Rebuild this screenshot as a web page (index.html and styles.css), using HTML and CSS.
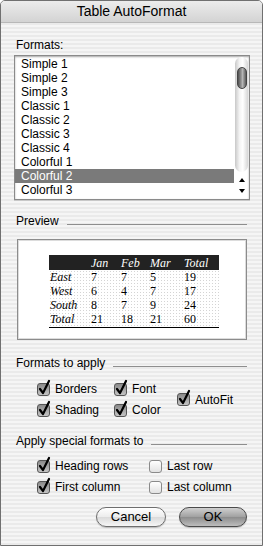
FILE: index.html
```html
<!DOCTYPE html>
<html lang="en">
<head>
    <meta charset="UTF-8">
    <title>Table AutoFormat</title>
    <link rel="stylesheet" href="styles.css">
</head>
<body>
    <div class="window">
        <div class="titlebar">Table AutoFormat</div>

        <div class="dialog">
            <div class="label">Formats:</div>

            <!-- format list -->
            <div class="listbox">
                <ul class="items">
                    <li>Simple 1</li>
                    <li>Simple 2</li>
                    <li>Simple 3</li>
                    <li>Classic 1</li>
                    <li>Classic 2</li>
                    <li>Classic 3</li>
                    <li>Classic 4</li>
                    <li>Colorful 1</li>
                    <li class="selected">Colorful 2</li>
                    <li>Colorful 3</li>
                </ul>
                <div class="scrollbar">
                    <div class="track"><div class="thumb"></div></div>
                    <div class="arrows">
                        <span class="arrow up"></span>
                        <span class="arrow down"></span>
                    </div>
                </div>
            </div>

            <div class="group"><span>Preview</span><i class="rule"></i></div>

            <!-- sample table -->
            <div class="preview">
                <table class="sample">
                    <colgroup>
                        <col style="width:41px"><col style="width:30px"><col style="width:29px"><col style="width:34px"><col>
                    </colgroup>
                    <thead>
                        <tr><th></th><th>Jan</th><th>Feb</th><th>Mar</th><th>Total</th></tr>
                    </thead>
                    <tbody>
                        <tr><th>East</th><td>7</td><td>7</td><td>5</td><td>19</td></tr>
                        <tr><th>West</th><td>6</td><td>4</td><td>7</td><td>17</td></tr>
                        <tr><th>South</th><td>8</td><td>7</td><td>9</td><td>24</td></tr>
                        <tr class="total"><th>Total</th><td>21</td><td>18</td><td>21</td><td>60</td></tr>
                    </tbody>
                </table>
            </div>

            <div class="group"><span>Formats to apply</span><i class="rule"></i></div>

            <div class="checks apply">
                <label class="check on"><span class="box"><svg viewBox="0 0 15 18"><path d="M3 10 L6 14 L12 2"/></svg></span>Borders</label>
                <label class="check on"><span class="box"><svg viewBox="0 0 15 18"><path d="M3 10 L6 14 L12 2"/></svg></span>Font</label>
                <label class="check on autofit"><span class="box"><svg viewBox="0 0 15 18"><path d="M3 10 L6 14 L12 2"/></svg></span>AutoFit</label>
                <label class="check on"><span class="box"><svg viewBox="0 0 15 18"><path d="M3 10 L6 14 L12 2"/></svg></span>Shading</label>
                <label class="check on"><span class="box"><svg viewBox="0 0 15 18"><path d="M3 10 L6 14 L12 2"/></svg></span>Color</label>
            </div>

            <div class="group"><span>Apply special formats to</span><i class="rule"></i></div>

            <div class="checks special">
                <label class="check on"><span class="box"><svg viewBox="0 0 15 18"><path d="M3 10 L6 14 L12 2"/></svg></span>Heading rows</label>
                <label class="check"><span class="box"></span>Last row</label>
                <label class="check on"><span class="box"><svg viewBox="0 0 15 18"><path d="M3 10 L6 14 L12 2"/></svg></span>First column</label>
                <label class="check"><span class="box"></span>Last column</label>
            </div>

            <div class="buttons">
                <button class="btn cancel">Cancel</button>
                <button class="btn default">OK</button>
            </div>
        </div>
    </div>
</body>
</html>
```

FILE: styles.css
```css
* {
    box-sizing: border-box;
}

html, body {
    margin: 0;
}

body {
    font-family: "Liberation Sans", Arial, sans-serif;
    font-size: 12px;
    color: #000;
    background: #fff;
}

/* window frame with aqua pinstripes */
.window {
    width: 263px;
    height: 546px;
    border: 1px solid #707070;
    border-radius: 5px 5px 0 0;
    background: repeating-linear-gradient(#f5f5f5 0 2px, #eaeaea 2px 4px);
    overflow: hidden;
}

.titlebar {
    height: 22px;
    line-height: 21px;
    text-align: center;
    font-size: 14px;
    background: linear-gradient(#ececec, #d3d3d3);
    border-bottom: 1px solid #b8b8b8;
}

.dialog {
    padding: 0 15px;
}

.label {
    line-height: 14px;
    margin-top: 15px;
}

/* list box */
.listbox {
    display: flex;
    height: 145px;
    margin: 3px -3px 0 -2px;
    background: #fff;
    border: 1px solid #8a8a8a;
    box-shadow: inset 0 1px 2px rgba(0,0,0,0.35), 0 1px 0 #c8c8c8;
}

.items {
    flex: 1;
    list-style: none;
    margin: 0;
    padding: 1px 0 0;
}

.items li {
    height: 14px;
    line-height: 14px;
    padding-left: 6px;
}

.items li.selected {
    background: #7a7a7a;
    color: #fff;
}

.scrollbar {
    width: 15px;
    display: flex;
    flex-direction: column;
}

.track {
    height: 115px;
    margin: 1px 1px 0 1px;
    padding-top: 10px;
    border-radius: 7px;
    background: linear-gradient(90deg, #c8c8c8, #f4f4f4 35%, #fff 60%, #d6d6d6);
}

.thumb {
    width: 10px;
    height: 22px;
    margin: 0 auto;
    border: 1px solid #444;
    border-radius: 5px;
    background: linear-gradient(90deg, #4e4e4e, #9c9c9c 45%, #b8b8b8 55%, #5a5a5a);
}

.arrows {
    flex: 1;
    display: flex;
    flex-direction: column;
    align-items: center;
    justify-content: space-around;
    padding: 2px 0 3px;
}

.arrow {
    width: 0;
    height: 0;
    border-left: 3px solid transparent;
    border-right: 3px solid transparent;
}

.arrow.up {
    border-bottom: 4px solid #000;
}

.arrow.down {
    border-top: 4px solid #000;
}

/* group headings with a rule */
.group {
    display: flex;
    align-items: center;
    gap: 8px;
    line-height: 14px;
    margin-top: 14px;
}

.group ~ .group {
    margin-top: 16px;
}

.rule {
    flex: 1;
    height: 1px;
    margin-top: 6px;
    background: #8e8e8e;
}

/* preview */
.preview {
    height: 101px;
    margin: 11px 0 0 1px;
    padding: 15px 0 0 31px;
    background: #fff;
    border: 1px solid #8c8c8c;
    box-shadow: inset 0 0 0 1px #dcdcdc;
}

.sample {
    width: 170px;
    table-layout: fixed;
    border-collapse: collapse;
    font-family: "Liberation Serif", "Times New Roman", serif;
    font-size: 12px;
}

.sample th,
.sample td {
    padding: 0 0 0 1px;
    height: 14px;
    line-height: 14px;
    text-align: left;
    font-weight: normal;
}

.sample th {
    font-style: italic;
}

.sample thead th {
    height: 15px;
    background: #222;
    color: #fff;
}

.sample tbody {
    background: radial-gradient(circle, #d4d4d4 0.7px, transparent 0.9px) 0 0 / 3px 3px;
}

.sample tr.total th,
.sample tr.total td {
    height: 15px;
    border-bottom: 1px solid #000;
}

/* checkboxes */
.checks {
    display: grid;
    row-gap: 5px;
    grid-auto-rows: 16px;
    margin-left: 21px;
}

.checks.apply {
    grid-template-columns: 77px 63px auto;
    margin-top: 11px;
}

.checks.special {
    grid-template-columns: 112px auto;
    margin-top: 10px;
}

.checks.apply .autofit {
    grid-column: 3;
    grid-row: 1 / span 2;
    align-self: center;
}

.check {
    display: flex;
    align-items: center;
    gap: 5px;
    white-space: nowrap;
}

.box {
    position: relative;
    flex: none;
    width: 13px;
    height: 13px;
    border: 1px solid #8a8a8a;
    border-radius: 3px;
    background: linear-gradient(#fff, #e2e2e2);
}

.check.on .box {
    border-color: #555;
    background: linear-gradient(#8a8a8a, #c4c4c4);
}

.box svg {
    position: absolute;
    left: -1px;
    top: -5px;
    width: 15px;
    height: 18px;
    overflow: visible;
}

.box svg path {
    fill: none;
    stroke: #000;
    stroke-width: 2.2;
    stroke-linecap: round;
    stroke-linejoin: round;
}

/* buttons */
.buttons {
    display: flex;
    justify-content: flex-end;
    gap: 13px;
    margin-top: 12px;
}

.btn {
    height: 20px;
    padding: 0;
    font-family: "Liberation Sans", Arial, sans-serif;
    font-size: 13px;
    line-height: 18px;
    color: #000;
    border: 1px solid #6e6e6e;
    border-radius: 10px;
    background: linear-gradient(#fff, #ececec 50%, #dadada 51%, #f6f6f6);
    box-shadow: 0 1px 1px rgba(0,0,0,0.2);
}

.btn.cancel {
    width: 70px;
}

.btn.default {
    width: 68px;
    border-color: #4a4a4a;
    background: linear-gradient(#cfcfcf, #a0a0a0 50%, #8c8c8c 51%, #bdbdbd);
}
```
